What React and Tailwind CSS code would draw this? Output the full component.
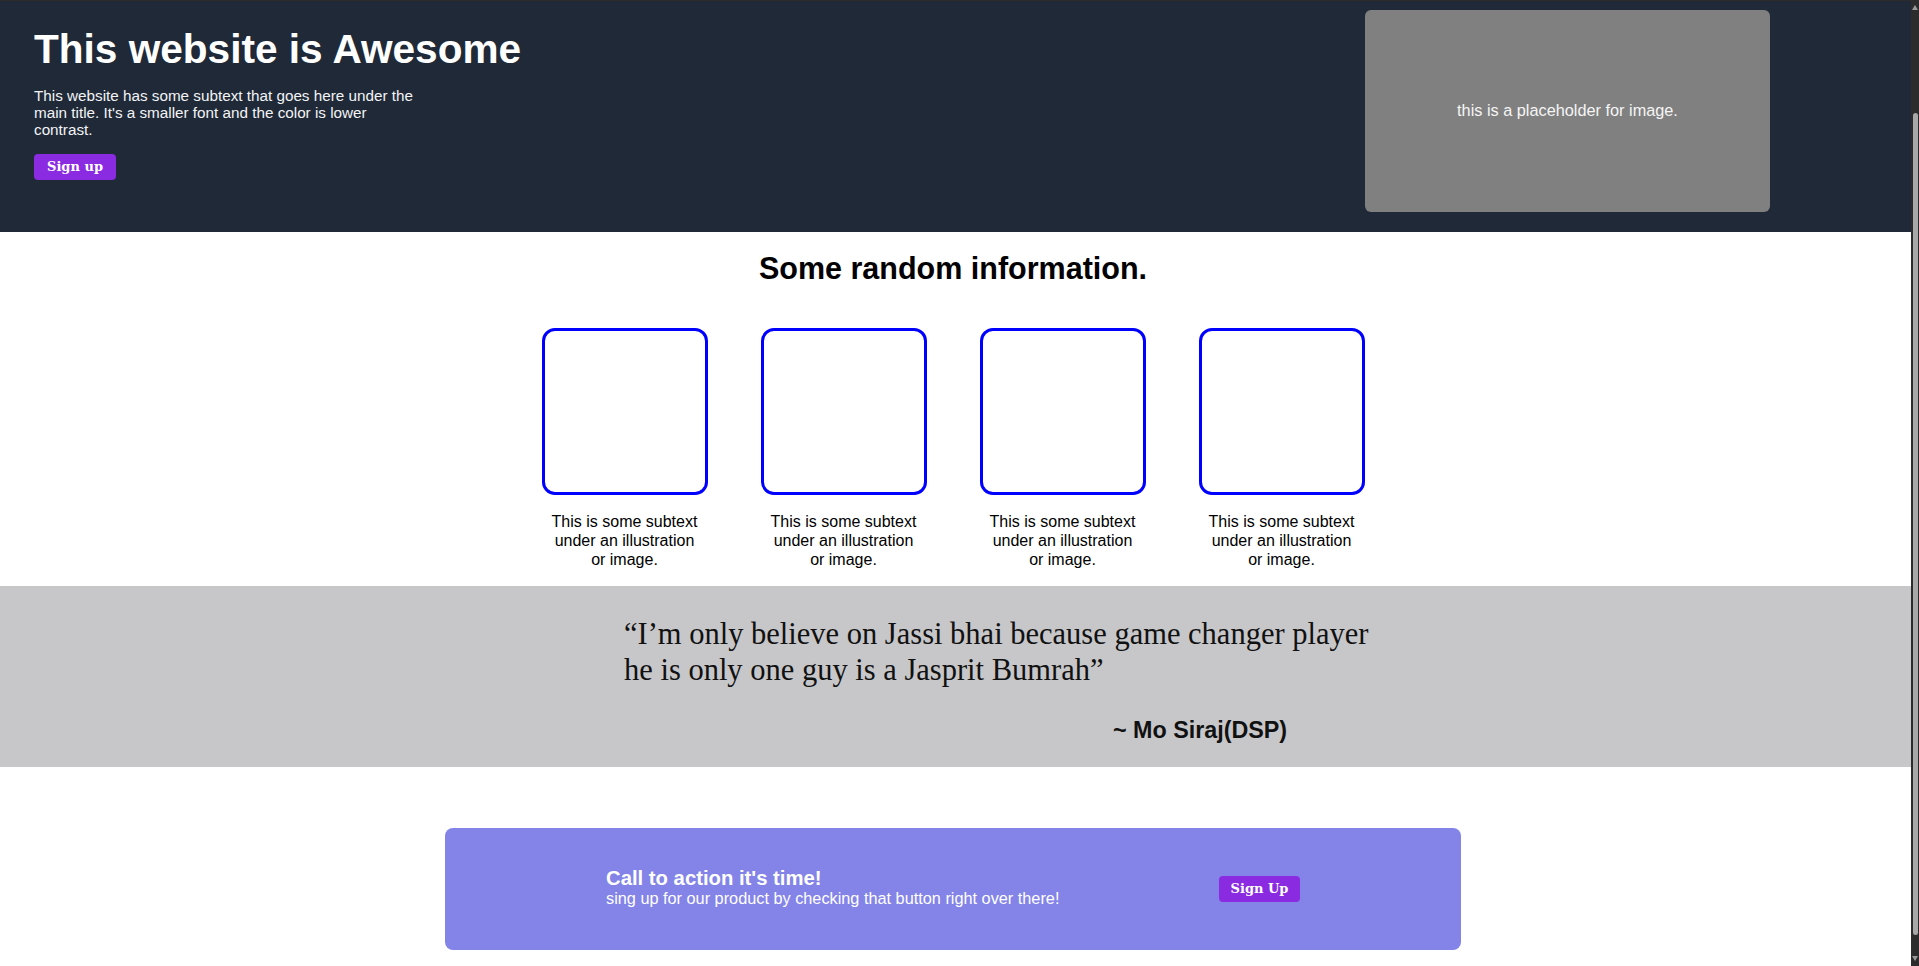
const cards = [1, 2, 3, 4];

const Header = () => {
  return (
    <header className="bg-[#1f2937] border-t border-[#2b2b2b] h-[232px] flex">
      <div className="pl-[34px] pt-[25px]">
        <h1 className="text-[40.6px] leading-[46px] font-bold text-white">This website is Awesome</h1>
        <p className="mt-[15px] w-[385px] text-[15.25px] leading-[17px] text-[#f3f4f6]">
          This website has some subtext that goes here under the main title. It's a smaller font and the color is lower contrast.
        </p>
        <button className="mt-[16px] h-[26px] w-[82px] rounded-[4px] bg-[#8a2be2] text-white text-[13px] font-bold font-['DejaVu_Serif',serif]">
          Sign up
        </button>
      </div>
      <div className="ml-auto mr-[141px] mt-[9px] w-[405px] h-[202px] rounded-md bg-[#808080] flex items-center justify-center">
        <span className="text-[16.3px] leading-[19px] text-[#f5f5f5] -mt-[2px]">this is a placeholder for image.</span>
      </div>
    </header>
  );
};

const Info = () => {
  return (
    <section className="bg-white pt-[18px] pb-[17px] pr-[5px]">
      <h2 className="text-center text-[30.5px] leading-[36px] font-bold text-black">Some random information.</h2>
      <div className="mt-[42px] flex justify-center gap-[53px]">
        {cards.map((c) => (
          <div key={c} className="w-[166px] flex flex-col items-center">
            <div className="w-[166px] h-[167px] rounded-[13px] border-[3px] border-[#0000ff]" />
            <p className="mt-[17px] w-[150px] text-center text-[16px] leading-[19px] text-black">
              This is some subtext under an illustration or image.
            </p>
          </div>
        ))}
      </div>
    </section>
  );
};

const Quote = () => {
  return (
    <section className="bg-[#c7c7c9] h-[181px] pt-[30px]">
      <div className="ml-[624px] w-[760px]">
        <p className="font-['Liberation_Serif',serif] text-[30.5px] leading-[36px] text-[#111]">
          “I’m only believe on Jassi bhai because game changer player he is only one guy is a Jasprit Bumrah”
        </p>
        <p className="mt-[29px] pl-[489px] text-[23.3px] leading-[27px] font-bold text-[#111]">~ Mo Siraj(DSP)</p>
      </div>
    </section>
  );
};

const CallToAction = () => {
  return (
    <section className="bg-white pt-[61px] pb-[17px] pr-[5px]">
      <div className="mx-auto w-[1016px] h-[122px] rounded-lg bg-[#8383e8] flex items-center justify-between px-[161px]">
        <div className="text-white pb-[3px]">
          <div className="text-[20.3px] leading-[22px] font-bold">Call to action it's time!</div>
          <div className="text-[16.3px] leading-[19px]">sing up for our product by checking that button right over there!</div>
        </div>
        <button className="h-[26px] w-[81px] rounded-[4px] bg-[#8a2be2] text-white text-[13px] font-bold font-['DejaVu_Serif',serif]">
          Sign Up
        </button>
      </div>
    </section>
  );
};

const Scrollbar = () => {
  return (
    <div className="w-[8px] h-[966px] bg-[#2c2c2c] flex flex-col items-center">
      <svg width="8" height="8" viewBox="0 0 8 8" className="mt-[4px]">
        <polygon points="4,1 7,6 1,6" fill="#9a9a9a" />
      </svg>
      <div className="mt-[101px] w-[5px] h-[822px] ml-[1px] rounded-sm bg-[#a8a8a8]" />
      <svg width="8" height="8" viewBox="0 0 8 8" className="mt-auto mb-[4px]">
        <polygon points="1,2 7,2 4,7" fill="#9a9a9a" />
      </svg>
    </div>
  );
};

export default function App() {
  return (
    <div className="flex w-full h-[966px] overflow-hidden font-['Liberation_Sans',Arial,sans-serif]">
      <main className="flex-1 min-w-0 bg-white">
        <Header />
        <Info />
        <Quote />
        <CallToAction />
      </main>
      <Scrollbar />
    </div>
  );
}
